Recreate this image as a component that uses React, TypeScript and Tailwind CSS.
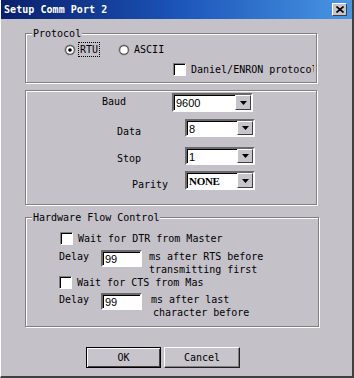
import React from 'react';

const mono = "font-['DejaVu_Sans_Mono',monospace] text-[10px] leading-[13px] text-black";

function Radio({ checked }: { checked?: boolean }) {
  return (
    <svg width="12" height="12" viewBox="0 0 12 12" className="shrink-0">
      <circle cx="6" cy="6" r="5.5" fill="#808080" />
      <path d="M1.2 9 A5.5 5.5 0 0 0 10.8 3.2 L 11.5 6 A5.5 5.5 0 0 1 0.5 6 Z" fill="#ffffff" />
      <circle cx="6" cy="6" r="4.5" fill="#404040" />
      <circle cx="6" cy="6" r="3.8" fill="#ffffff" />
      {checked && <circle cx="6" cy="6" r="1.8" fill="#000" />}
    </svg>
  );
}

function Check() {
  return (
    <div className="w-[13px] h-[13px] shrink-0 bg-white border border-t-[#808080] border-l-[#808080] border-b-white border-r-white shadow-[inset_1px_1px_0_#000]" />
  );
}

function Combo({ value, width, serif }: { value: string; width: string; serif?: boolean }) {
  return (
    <div className={`${width} h-full flex bg-white border-2 border-t-[#6a6a6a] border-l-[#6a6a6a] border-b-white border-r-white shadow-[inset_1px_1px_0_#000]`}>
      <span
        className={`flex-1 pl-[2px] pt-[1px] text-[11px] leading-[14px] ${
          serif ? "font-['Liberation_Serif',serif] font-bold tracking-[-0.3px]" : "font-['Liberation_Sans',sans-serif]"
        }`}
      >
        {value}
      </span>
      <div className="w-[16px] h-full bg-[#c8c4cc] border border-t-white border-l-white border-b-[#404040] border-r-[#404040] flex items-center justify-center">
        <svg width="7" height="4" viewBox="0 0 7 4">
          <path d="M0 0 H7 L3.5 4 Z" fill="#000" />
        </svg>
      </div>
    </div>
  );
}

function TextBox({ value }: { value: string }) {
  return (
    <div className="w-[41px] h-[17px] shrink-0 bg-white border-2 border-t-[#6a6a6a] border-l-[#6a6a6a] border-b-white border-r-white shadow-[inset_1px_1px_0_#000] pl-[2px] font-['Liberation_Sans',sans-serif] text-[11px] leading-[14px]">
      {value}
    </div>
  );
}

function Group({ label, className, children }: { label?: string; className: string; children: React.ReactNode }) {
  return (
    <div className={`relative border border-[#808080] shadow-[1px_1px_0_#fff,inset_1px_1px_0_#fff] ${className}`}>
      {label && (
        <span className={`absolute -top-[7px] left-[6px] px-[1px] bg-[#c4c1c9] ${mono}`}>{label}</span>
      )}
      {children}
    </div>
  );
}

export default function App() {
  return (
    <div className={`w-[354px] h-[378px] bg-[#c4c1c9] border-l border-l-white border-r-2 border-r-[#404040] border-b-2 border-b-[#404040] overflow-hidden ${mono}`}>
      <div className="h-[19px] flex items-center justify-between pl-[3px] pr-[5px] bg-gradient-to-r from-[#0a1f6c] via-[#1c54b8] to-[#4a96e4]">
        <span className="text-white font-bold text-[10px] tracking-[0.05px]">Setup Comm Port 2</span>
        <div className="w-[15px] h-[13px] bg-[#c8c4cc] border border-t-white border-l-white border-b-[#404040] border-r-[#404040] flex items-center justify-center">
          <svg width="8" height="7" viewBox="0 0 8 7">
            <path d="M0.5 0.5 L7.5 6.5 M7.5 0.5 L0.5 6.5" stroke="#000" strokeWidth="1.6" />
          </svg>
        </div>
      </div>

      <div className="pl-[24px] flex flex-col">
        <Group label="Protocol" className="mt-[14px] w-[292px] h-[50px]">
          <div className="flex items-center mt-[8px] h-[15px]">
            <div className="ml-[38px]"><Radio checked /></div>
            <span className="ml-[2px] px-[1px] border border-dotted border-black leading-[13px]">RTU</span>
            <div className="ml-[18px]"><Radio /></div>
            <span className="ml-[4px]">ASCII</span>
          </div>
          <div className="flex items-center mt-[6px] h-[13px]">
            <div className="ml-[147px]"><Check /></div>
            <span className="ml-[5px] whitespace-nowrap overflow-hidden w-[123px]">Daniel/ENRON protocol</span>
          </div>
        </Group>

        <Group className="mt-[7px] w-[292px] h-[115px]">
          <div className="flex mt-[2px] h-[19px]">
            <span className="ml-[76px] w-[70px] pt-[2px]">Baud</span>
            <Combo value="9600" width="w-[81px]" />
          </div>
          <div className="flex mt-[7px] h-[18px]">
            <span className="ml-[91px] w-[68px] pt-[6px]">Data</span>
            <Combo value="8" width="w-[70px]" />
          </div>
          <div className="flex mt-[10px] h-[18px]">
            <span className="ml-[91px] w-[68px] pt-[5px]">Stop</span>
            <Combo value="1" width="w-[70px]" />
          </div>
          <div className="flex mt-[6px] h-[19px]">
            <span className="ml-[106px] w-[53px] pt-[7px]">Parity</span>
            <Combo value="NONE" width="w-[70px]" serif />
          </div>
        </Group>

        <Group label="Hardware Flow Control" className="mt-[12px] w-[294px] h-[110px]">
          <div className="flex items-center mt-[14px] h-[13px]">
            <div className="ml-[34px]"><Check /></div>
            <span className="ml-[5px]">Wait for DTR from Master</span>
          </div>
          <div className="flex mt-[5px]">
            <span className="ml-[33px] w-[42px]">Delay</span>
            <TextBox value="99" />
            <span className="ml-[7px]">ms after RTS before<br />transmitting first</span>
          </div>
          <div className="flex items-center h-[13px]">
            <div className="ml-[33px]"><Check /></div>
            <span className="ml-[5px]">Wait for CTS from Mas</span>
          </div>
          <div className="flex mt-[4px]">
            <span className="ml-[33px] w-[42px]">Delay</span>
            <TextBox value="99" />
            <span className="ml-[9px]">ms after last<br /><span className="ml-[2px]">character before</span></span>
          </div>
        </Group>
      </div>

      <div className="flex gap-[3px] ml-[85px] mt-[20px]">
        <button className="w-[75px] h-[21px] bg-[#c8c4cc] border border-black shadow-[inset_1px_1px_0_#fff,inset_-1px_-1px_0_#404040] leading-[13px]">OK</button>
        <button className="w-[76px] h-[21px] bg-[#c8c4cc] border border-t-white border-l-white border-b-[#202020] border-r-[#202020] shadow-[inset_-1px_-1px_0_#808080] leading-[13px]">Cancel</button>
      </div>
    </div>
  );
}
